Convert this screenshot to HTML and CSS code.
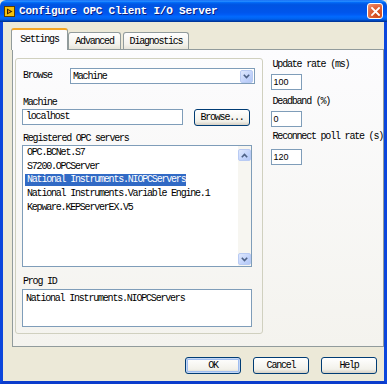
FILE: index.html
```html
<!DOCTYPE html>
<html lang="en">
<head>
  <meta charset="UTF-8" />
  <title>Configure OPC Client I/O Server</title>
  <link rel="stylesheet" href="styles.css">
</head>
<body>
  <div class="window">
    <div class="titlebar">
      <span class="app-icon">
        <svg width="11" height="11" viewBox="0 0 11 11">
          <rect x="0.5" y="0.5" width="10" height="10" fill="#f4c20d" stroke="#5a3d00"/>
          <polygon points="3,2.5 8.5,5.5 3,8.5" fill="#3b2200"/>
          <polygon points="4,4 6.5,5.5 4,7" fill="#f08a00"/>
        </svg>
      </span>
      <span class="title">Configure OPC Client I/O Server</span>
      <span class="close-btn">
        <svg width="9" height="9" viewBox="0 0 9 9">
          <path d="M1 1 L8 8 M8 1 L1 8" stroke="#fff" stroke-width="1.8" stroke-linecap="square"/>
        </svg>
      </span>
    </div>

    <div class="frame">
      <div class="tabs">
        <div class="tab active">Settings</div>
        <div class="tab tab-adv">Advanced</div>
        <div class="tab tab-diag">Diagnostics</div>
      </div>

      <div class="panel">
        <div class="group">
          <div class="browse-row">
            <span class="lbl browse-lbl">Browse</span>
            <div class="select">
              <span class="select-text">Machine</span>
              <span class="xp-btn drop-btn">
                <svg width="7" height="5" viewBox="0 0 7 5"><path d="M0.8 0.8 L3.5 3.6 L6.2 0.8" fill="none" stroke="#4d6185" stroke-width="1.6"/></svg>
              </span>
            </div>
          </div>

          <div class="lbl lbl-machine">Machine</div>
          <div class="machine-row">
            <div class="field machine-field">localhost</div>
            <div class="button browse-btn">Browse...</div>
          </div>

          <div class="lbl lbl-servers">Registered OPC servers</div>
          <div class="listbox">
            <ul class="items">
              <li>OPC.BCNet.S7</li>
              <li>S7200.OPCServer</li>
              <li><span class="selected">National Instruments.NIOPCServers</span></li>
              <li>National Instruments.Variable Engine.1</li>
              <li>Kepware.KEPServerEX.V5</li>
            </ul>
            <div class="scrollbar">
              <span class="xp-btn scroll-btn">
                <svg width="7" height="5" viewBox="0 0 7 5"><path d="M0.8 4.2 L3.5 1.4 L6.2 4.2" fill="none" stroke="#4d6185" stroke-width="1.6"/></svg>
              </span>
              <span class="track"></span>
              <span class="xp-btn scroll-btn">
                <svg width="7" height="5" viewBox="0 0 7 5"><path d="M0.8 0.8 L3.5 3.6 L6.2 0.8" fill="none" stroke="#4d6185" stroke-width="1.6"/></svg>
              </span>
            </div>
          </div>

          <div class="lbl lbl-prog">Prog ID</div>
          <div class="field prog-field">National Instruments.NIOPCServers</div>
        </div>

        <div class="side">
          <div class="lbl side-lbl">Update rate (ms)</div>
          <div class="field num-field nf-1">100</div>
          <div class="lbl side-lbl sl-2">Deadband (%)</div>
          <div class="field num-field nf-2">0</div>
          <div class="lbl side-lbl sl-3">Reconnect poll rate (s)</div>
          <div class="field num-field nf-3">120</div>
        </div>
      </div>

      <div class="actions">
        <div class="button default">OK</div>
        <div class="button">Cancel</div>
        <div class="button">Help</div>
      </div>
    </div>
  </div>
</body>
</html>
```

FILE: styles.css
```css
body {
  margin: 0;
  padding: 0;
  background: #ece9d8;
  font-family: 'Liberation Mono', monospace;
  font-size: 10px;
  letter-spacing: -1.2px;
  color: #000;
  overflow: hidden;
}
.window {
  width: 387px;
  height: 384px;
  display: flex;
  flex-direction: column;
}
.titlebar {
  height: 22px;
  display: flex;
  align-items: center;
  padding: 0 4px 0 4px;
  box-sizing: border-box;
  border-radius: 6px 6px 0 0;
  background: linear-gradient(#0058ee 0%, #3593ff 4%, #288eff 6%, #127dff 8%, #036ffc 10%, #0262ee 14%, #0057e5 20%, #0054e3 24%, #0055eb 56%, #005bf5 66%, #026afe 76%, #0062ef 86%, #0052d6 92%, #0040ab 94%, #003092 100%);
}
.app-icon {
  display: flex;
  width: 11px;
  height: 11px;
  margin-right: 4px;
}
.title {
  flex: 1;
  color: #fff;
  font-weight: bold;
  font-size: 11px;
  letter-spacing: -0.2px;
  text-shadow: 1px 1px 0 #0a1f80;
}
.close-btn {
  width: 16px;
  height: 16px;
  display: flex;
  align-items: center;
  justify-content: center;
  border: 1px solid #fff;
  border-radius: 3px;
  box-sizing: border-box;
  background: radial-gradient(circle at 70% 75%, #cc4614 0%, #e0643c 55%, #f09a7c 100%);
}
.frame {
  flex: 1;
  border-left: 3px solid #0b46dc;
  border-right: 3px solid #0b46dc;
  border-bottom: 3px solid #0b3ccc;
  padding: 6px 0 0 9px;
  display: flex;
  flex-direction: column;
}

/* tabs */
.tabs {
  display: flex;
  align-items: flex-end;
  height: 21px;
  position: relative;
  z-index: 1;
}
.tab {
  height: 17px;
  box-sizing: border-box;
  border: 1px solid #919b9c;
  border-bottom: none;
  border-radius: 3px 3px 0 0;
  background: linear-gradient(#fefefe, #f3f2ec 70%, #e6e4d9);
  display: flex;
  align-items: center;
  justify-content: center;
  padding-top: 1px;
}
.tab.active {
  height: 22px;
  width: 57px;
  margin-left: -1px;
  margin-bottom: -1px;
  border-top: 2px solid #f5a623;
  background: #fcfcfe;
  padding-top: 0;
  padding-bottom: 2px;
}
.tab-adv {
  width: 53px;
}
.tab-diag {
  width: 66px;
  margin-left: 2px;
}

/* panel */
.panel {
  width: 372px;
  height: 298px;
  box-sizing: border-box;
  border: 1px solid #919b9c;
  background: linear-gradient(#fcfcfe, #f4f3ee);
  padding: 8px 0 0 2px;
  display: flex;
}
.group {
  width: 248px;
  height: 276px;
  box-sizing: border-box;
  border: 1px solid #d0d0bf;
  border-radius: 3px;
  padding: 9px 6px 6px 6px;
}
.lbl {
  line-height: 12px;
  height: 12px;
  padding-left: 1px;
  white-space: nowrap;
}
.browse-row {
  display: flex;
  align-items: center;
  height: 16px;
}
.browse-lbl {
  width: 47px;
}
.select {
  width: 185px;
  height: 16px;
  box-sizing: border-box;
  border: 1px solid #7f9db9;
  background: #fff;
  display: flex;
  align-items: center;
  padding: 0 1px 0 2px;
}
.select-text {
  flex: 1;
}
.xp-btn {
  display: flex;
  align-items: center;
  justify-content: center;
  box-sizing: border-box;
  border: 1px solid #b9cbf3;
  border-radius: 2px;
  background: linear-gradient(135deg, #dfe8fd, #c2d3fb 60%, #b3c7f5);
}
.drop-btn {
  width: 13px;
  height: 13px;
}
.lbl-machine {
  margin-top: 13px;
}
.machine-row {
  display: flex;
  align-items: flex-start;
}
.field {
  box-sizing: border-box;
  border: 1px solid #7f9db9;
  background: #fff;
  white-space: nowrap;
}
.machine-field {
  width: 161px;
  height: 16px;
  line-height: 14px;
  padding-left: 3px;
}
.button {
  width: 56px;
  height: 17px;
  box-sizing: border-box;
  border: 1px solid #003c74;
  border-radius: 3px;
  background: linear-gradient(#ffffff, #f2f1ea 75%, #d6d0c5);
  display: flex;
  align-items: center;
  justify-content: center;
}
.browse-btn {
  margin-left: 11px;
}
.lbl-servers {
  margin-top: 7px;
}
.listbox {
  width: 230px;
  height: 122px;
  box-sizing: border-box;
  border: 1px solid #7f9db9;
  background: #fff;
  display: flex;
}
.items {
  flex: 1;
  list-style: none;
  margin: 0;
  padding: 0 0 0 4px;
}
.items li {
  height: 13.7px;
  line-height: 13.7px;
  white-space: nowrap;
}
.selected {
  background: #316ac5;
  color: #fff;
  padding: 0 1px 0 2px;
  margin-left: -2px;
  display: inline-block;
  line-height: 12px;
}
.scrollbar {
  width: 13px;
  display: flex;
  flex-direction: column;
  padding: 3px 0 1px 0;
  background: #f7f6f1;
}
.scroll-btn {
  height: 12px;
}
.track {
  flex: 1;
}
.lbl-prog {
  margin-top: 9px;
}
.prog-field {
  margin-top: 1px;
  width: 230px;
  height: 38px;
  line-height: 12px;
  padding: 3px 0 0 3px;
}

/* right column */
.side {
  margin-left: 8px;
  margin-top: 1px;
}
.side-lbl {
  padding-left: 2px;
}
.num-field {
  width: 31px;
  height: 16px;
  font-family: 'Liberation Sans', sans-serif;
  font-size: 9px;
  letter-spacing: 0;
  line-height: 14px;
  padding-left: 2px;
}
.nf-1 { margin-top: 3px; }
.sl-2 { margin-top: 6px; }
.nf-2 { margin-top: 3px; }
.sl-3 { margin-top: 4px; }
.nf-3 { margin-top: 6px; }

/* dialog buttons */
.actions {
  display: flex;
  justify-content: flex-end;
  gap: 12px;
  margin-top: 10px;
  padding-right: 7px;
}
.button.default {
  box-shadow: inset 0 0 0 1px #c4d7f5, inset 0 0 0 2px #9fbdf0;
}
```
